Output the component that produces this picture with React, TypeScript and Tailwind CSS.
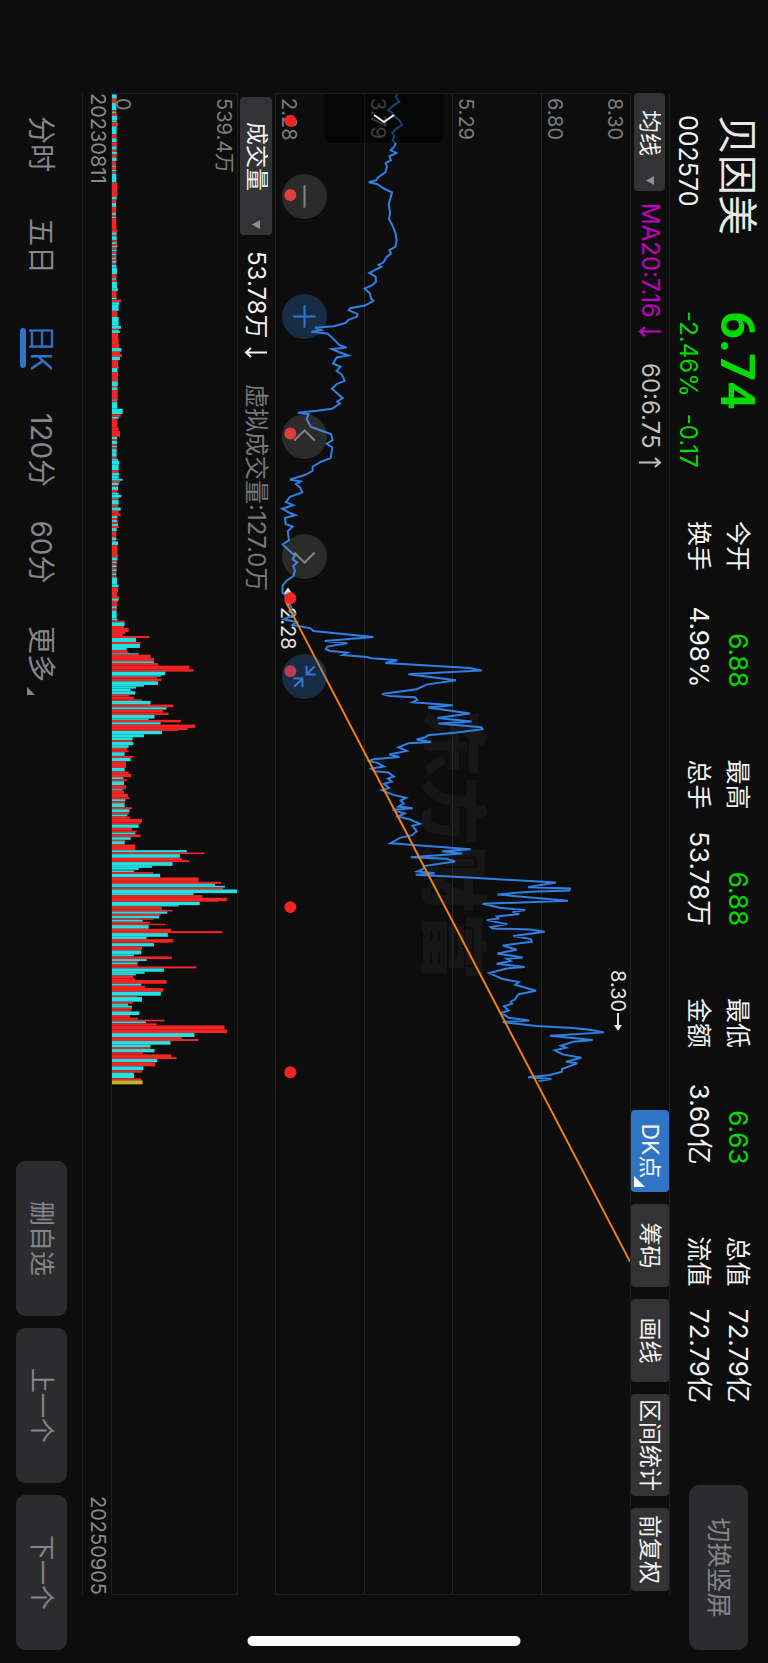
import React from "react";

const UP = "#f52424";
const DOWN = "#20e2e4";

// chart drawing units: 3 per pixel, x from the first day, y up from the bottom line
const CHART_W = 4503;
const CHART_H = 1062;
const VOLUME_H = 376;

const pricePoints =
  "1,364 9,359 23,370 35,352 49,336 55,347 67,355 79,370 93,378 104,362 116,349 127,355 139,350 149,359 159,354 169,344 177,361 187,340 199,345 207,329 219,333 235,328 249,308 259,300 265,278 271,305 283,322 295,348 311,344 331,338 356,342 376,339 396,350 416,358 439,362 459,358 469,340 479,345 489,332 506,322 513,308 519,316 537,280 549,299 563,300 573,290 584,266 599,282 613,285 621,292 635,267 643,222 649,218 661,245 669,242 679,216 687,210 697,172 702,117 709,135 714,106 719,154 731,168 753,190 761,211 766,168 776,192 785,217 791,182 809,171 819,194 831,182 843,198 861,206 871,182 885,168 913,200 923,184 929,192 945,168 951,122 957,66 961,98 976,92 999,104 1011,137 1021,165 1039,170 1050,152 1061,169 1093,164 1104,135 1119,110 1131,110 1144,87 1157,42 1163,74 1171,60 1181,72 1196,79 1209,42 1225,30 1234,52 1245,19 1257,40 1264,58 1273,27 1291,29 1299,50 1313,35 1339,39 1352,20 1371,40 1385,57 1397,50 1406,64 1417,52 1431,57 1447,52 1461,32 1476,20 1496,19 1511,34 1526,39 1544,47 1553,40 1561,57 1577,24 1585,62 1594,49 1604,104 1612,112 1630,292 1642,146 1649,214 1659,154 1667,150 1672,162 1677,214 1684,200 1690,272 1694,287 1700,364 1708,328 1723,582 1731,617 1742,397 1760,540 1773,452 1787,422 1801,318 1807,342 1811,417 1819,424 1826,410 1835,530 1842,456 1860,582 1873,484 1884,587 1890,487 1901,616 1907,620 1917,542 1925,456 1931,448 1938,422 1945,465 1949,397 1961,367 1972,392 1983,340 1990,370 1997,292 2002,280 2008,304 2019,324 2025,286 2033,297 2037,337 2049,353 2055,336 2064,347 2071,324 2083,339 2090,317 2104,352 2113,390 2121,374 2130,383 2139,367 2144,410 2149,350 2160,386 2169,366 2178,402 2191,432 2197,409 2213,422 2225,408 2233,372 2249,343 2267,584 2273,499 2280,558 2291,404 2296,512 2304,537 2317,447 2327,440 2334,424 2339,476 2344,419 2353,592 2367,840 2381,756 2385,882 2391,880 2395,762 2403,664 2422,876 2431,620 2443,672 2450,748 2456,710 2462,730 2469,662 2475,667 2480,632 2492,694 2501,644 2505,650 2508,762 2515,806 2528,712 2537,764 2545,768 2556,680 2569,722 2580,664 2592,740 2596,692 2603,704 2611,662 2621,746 2625,692 2639,640 2656,677 2666,728 2674,718 2692,780 2703,726 2717,718 2725,704 2731,708 2739,684 2751,698 2759,676 2773,698 2781,760 2786,680 2798,782 2804,892 2809,942 2817,984 2827,822 2840,950 2845,892 2857,855 2863,870 2871,836 2883,860 2893,916 2905,870 2910,904 2927,858 2935,858 2945,822 2952,756 2957,826 2963,787";

const signalDays = [80, 303, 1019, 1514, 1733, 2441, 2937];

// each bar: start, u (up) / d (down) / n (today), height; it runs to the next start
const volumeBlocks = [
  {
    offset: -39,
    bars: "40d14 53u14 65d13 88u13 92d13 97u15 105d15 118d14 124u18 136d14 160u14 172d14 184u15 196d14 206u14 212d15 220u14 230d14 240u12 254d12 258u12 267d13 272u12 278d13 305u16 348d14 356u13 366d12 378u12 396d12 402u12 408d12 412u13 445u16 454d14 462u14 466d14 478u15 484d14 490u17 495d16 500u14 506d14 512u13 518d13 524u14 530d13 536u14 540d13 546u12 552d13 560d15 580u14 592d13 597u14 603d15 622d18 630u14 650d14 656u28 664d22 672d20 690u16 708d20 735d27 744u20 748d20 756u18 770u20 790u17 803d26 812u20 822u28 828d24 838u18 843d16 856u20 864d16 874u18 904d17 916u16 920d16 928u18",
  },
  {
    offset: 711,
    bars: "0d24 6u18 15u18 40u22 52d28 62u24 70u30 78d22 88u18 108u20 112d16 124u18 152d17 166u16 170d16 178u17 206d16 210u16 214d16 234d32 250u26 258d20 264u16 290u20 300u24 318d15 325u15 330d15 340u14 345d15 350u14 355d14 366d14 378u14 384d18 390d22 402d20 418u20 426d22 434d20 444d32 450u24 456d20 464u18 468d18 478u16 486d20 492d28 500d20 504u18 508d20 522u18 530d26 540u20 548u26 556d16 562u16 568d16 574u18 580d18 586u20 592d14 602u13 620d13 628u12 632d18 644u16 670u18 680d16 690u14 694d15 698u14 704d14 710u14 716d14 722u13 728d13 734u13 740d15 762d20 770u18 785d14 790u16 798u22 804d18 812u14 826d14 830u14",
  },
  {
    offset: 1491,
    bars: "0u14 6u14 18u22 24d20 30u16 48d14 54u15 60d14 84d16 90u38 95d38 106u36 112u50 124u40 130u32 136u112 142d72 154u86 160d84 172d44 178u46 184u50 188d80 192u116 202u126 212d126 217u138 225u232 236u245 243d160 254d148 258u136 264u148 272d138 283d96 288d72 294d56 302d70 312u52 318u66 326u90 331d116 342u185 350d164 357u154 366u170 373d128 384d110 388u208 395d146 402u250 412u228 418u200 421d150 431d96 440d62 449u60 454d64 464d50 472u46 480u50 485d38 496u64 502d56 512u42 532d38 543u50 550u58 560d34 566u44 572d36 584u42 596d32 600u36 610u48 620u52 626d40 632u40 638d38 650u60 656d52 666u50 672d46 678u54 685u90 696u86 702d80 712u60 720u74 726d70 732u86 740d56 748u40 752d38 762u70",
  },
  {
    offset: 2241,
    bars: "29d225 36u278 41d204 52u210 59u232 65d182 76d120 82d80 88u70 90d66 95u124 100d145 111u260 124u328 130d310 136d340 141u335 147d376 158d245 164u272 172u346 182u322 184d264 194d200 198u150 208u182 213d166 220u146 226d142 234u125 238d92 244u114 250u160 254d110 265u178 272u332 278d168 289d104 296u184 306u168 308d126 318u90 330d88 342d66 348u180 356d104 362u80 366d76 372u78 378u254 384d156 394d98 400d72 405u64 414u70 419u164 430d88 436u100 443u154 454d147 466u76 470d90 484u62 490d48 496d60 502u60 508u58 513d82 524u54 532u78 538u158 543d102 549u134 555u338 567u346 578d248 590u210 596u260 602d176 613d116 620u116 626d128 636u94 642u178 650u194 656d136 666u130 678d94 690u90 697d66 714u88 720n92",
  },
];

const VOLUME_END = 2973;

const volumeBars = volumeBlocks
  .flatMap(({ offset, bars }) =>
    bars.split(" ").map((bar) => {
      const [, start, kind, height] = bar.match(/(\d+)([udn])(\d+)/)!;
      return { x: Number(start) + offset, kind, height: Number(height) };
    })
  )
  .map((bar, i, all) => ({
    ...bar,
    width: (i + 1 < all.length ? all[i + 1].x : VOLUME_END) - bar.x,
  }));

const barColor: Record<string, string> = { u: UP, d: DOWN, n: "#c9b32a" };

const stats = [
  [
    { label: "今开", value: "6.88", green: true },
    { label: "换手", value: "4.98%" },
  ],
  [
    { label: "最高", value: "6.88", green: true },
    { label: "总手", value: "53.78万" },
  ],
  [
    { label: "最低", value: "6.63", green: true },
    { label: "金额", value: "3.60亿" },
  ],
  [
    { label: "总值", value: "72.79亿" },
    { label: "流值", value: "72.79亿" },
  ],
];

const tabs = ["分时", "五日", "日K", "120分", "60分", "更多"];

const Header = () => (
  <header className="flex h-[98px] shrink-0 items-start pr-[13px] pl-[115px]">
    <div className="w-[196px] shrink-0 pt-[10px]">
      <h1 className="text-[40px] leading-[42px] text-[#e8e8e8]">贝因美</h1>
      <p className="mt-[13px] text-[25px] leading-[30px]">002570</p>
    </div>
    <div className="w-[210px] shrink-0 pt-[9px] text-[#00dc00]">
      <p className="font-['Roboto'] text-[49px] leading-[44px] font-bold">6.74</p>
      <p className="mt-[12px] flex gap-[17px] text-[24px] leading-[30px]">
        <span>-2.46%</span>
        <span>-0.17</span>
      </p>
    </div>
    <div className="mr-[82px] grid flex-1 grid-cols-4 gap-x-[72px] pt-[15px]">
      {stats.map((column, i) => (
        <dl key={i} className="flex flex-col gap-[9px] text-[25px] leading-[30px]">
          {column.map((item) => (
            <div key={item.label} className="flex justify-between whitespace-nowrap">
              <dt>{item.label}</dt>
              <dd className={`text-[26px] ${item.green ? "text-[#00dc00]" : ""}`}>{item.value}</dd>
            </div>
          ))}
        </dl>
      ))}
    </div>
    <button className="mt-[20px] h-[59px] w-[165px] shrink-0 rounded-[10px] bg-[#2c2c2e] text-[25px] text-[#85858a]">
      切换竖屏
    </button>
  </header>
);

const Picker = ({ label, className }: { label: string; className: string }) => (
  <div className="relative shrink-0">
    <select aria-label={label} className={`block appearance-none rounded-[4px] bg-[#333335] text-[23px] ${className}`}>
      <option>{label}</option>
    </select>
    <svg className="pointer-events-none absolute top-1/2 right-[6px] h-[8px] w-[9px] -translate-y-1/2" viewBox="0 0 9 8">
      <path d="M0 0h9L4.5 8z" fill="#8e8e93" />
    </svg>
  </div>
);

const Trend = ({ up = false }: { up?: boolean }) => (
  <svg
    className="ml-[8px] h-[24px] w-[11px] shrink-0"
    viewBox="0 0 11 24"
    fill="none"
    stroke="currentColor"
    strokeWidth="2"
  >
    <path d={up ? "M5.500 23V2M1 7l4.500-5L10 7" : "M5.500 1V22M1 17l4.500 5L10 17"} />
  </svg>
);

const ToolButton = ({ children, className = "w-[83px] bg-[#333335]" }: { children: React.ReactNode; className?: string }) => (
  <button className={`relative h-[38px] rounded-[4px] text-[23px] whitespace-nowrap ${className}`}>{children}</button>
);

const Toolbar = () => (
  <div className="mr-[68px] ml-[93px] flex h-[39px] shrink-0 items-center border-t border-[#1f1f21]">
    <Picker label="均线" className="h-[31px] w-[98px] pl-[17px]" />
    <span className="ml-[12px] flex w-[160px] items-center text-[24px] text-[#c400c4]">
      MA20:7.16
      <Trend />
    </span>
    <span className="flex items-center text-[24px] text-[#c0c0c0]">
      60:6.75
      <Trend up />
    </span>
    <div className="mr-[4px] ml-auto flex gap-[12px]">
      <ToolButton className="w-[82px] bg-[#2f74c5]">
        DK点
        <svg className="absolute right-[5px] bottom-[3px] size-[11px]" viewBox="0 0 11 11">
          <path d="M11 0v11H0z" fill="#fff" />
        </svg>
      </ToolButton>
      <ToolButton>筹码</ToolButton>
      <ToolButton>画线</ToolButton>
      <ToolButton className="w-[102px] bg-[#333335]">区间统计</ToolButton>
      <ToolButton>前复权</ToolButton>
    </div>
  </div>
);

const RoundButton = ({ label, path, blue = false }: { label: string; path: string; blue?: boolean }) => (
  <button
    aria-label={label}
    className={`size-[45px] rounded-full ${blue ? "bg-[#3074c8]/30" : "bg-[#96969b]/22"}`}
  >
    <svg viewBox="-22 -22 44 44" fill="none" stroke={blue ? "#2f78cc" : "#848488"} strokeWidth="2">
      <path d={path} />
    </svg>
  </button>
);

const PriceChart = () => {
  const line = pricePoints
    .split(" ")
    .map((p) => p.split(",").map(Number))
    .map(([x, h]) => `${x},${CHART_H - h}`)
    .join(" ");

  return (
    <section className="relative mr-[68px] ml-[93px] flex-1 border border-[#1f1f21]">
      <span className="absolute top-[133px] left-[41%] font-['Noto_Sans_CJK_SC'] text-[68px] leading-[80px] font-black text-[#161616]">
        东方财富
      </span>
      <div className="relative flex h-full flex-col text-[20px] leading-[20px] text-[#7c7c80]">
        <span className="absolute top-[5px] left-[4px]">8.30</span>
        {["6.80", "5.29", "3.79", "2.28"].map((price) => (
          <div key={price} className="flex flex-1 items-end border-b border-[#262628] pb-[3px] pl-[4px] last:border-0">
            {price}
          </div>
        ))}
      </div>
      <span className="absolute bottom-[2px] left-[513px] text-[20px] leading-[20px] text-[#e4e4e4]">2.28</span>
      <svg
        className="absolute inset-0 h-full w-full"
        viewBox={`0 0 ${CHART_W} ${CHART_H}`}
        preserveAspectRatio="none"
        fill="none"
      >
        <path d="M1488 1026h48M1500 1016l-14 10 14 10z" stroke="#e4e4e4" strokeWidth="5" />
        <polyline points={line} stroke="#2f80e4" strokeWidth="6" strokeLinejoin="miter" />
        <path d="M1521 1034L3505 0" stroke="#f08010" strokeWidth="6" />
        {signalDays.map((x) => (
          <circle key={x} cx={x} cy="1019" r="18" fill={UP} />
        ))}
      </svg>
      <span className="absolute top-[2px] left-[876px] flex items-center text-[20px] leading-[20px] text-[#e4e4e4]">
        8.30
        <svg className="h-[10px] w-[19px]" viewBox="0 0 19 10">
          <path d="M1 5h13" stroke="#e4e4e4" strokeWidth="2" />
          <path d="M13 1l6 4-6 4z" fill="#e4e4e4" />
        </svg>
      </span>
      <button
        aria-label="展开"
        className="absolute bottom-[49px] left-0 flex h-[118px] w-[49px] items-center justify-center rounded-r-[3px] bg-black/50"
      >
        <svg className="h-[22px] w-[9px]" viewBox="0 0 9 22" fill="none" stroke="#e8e8e8" strokeWidth="2">
          <path d="M1 1l7 10-7 10" />
        </svg>
      </button>
      <div className="absolute bottom-[6px] left-[80px] flex gap-[75px]">
        <RoundButton label="缩小" path="M-11 0H11" />
        <RoundButton label="放大" path="M-11 0H11M0-11V11" blue />
        <RoundButton label="左移" path="M4-10L-6 0 4 10" />
        <RoundButton label="右移" path="M-4-10L6 0-4 10" />
        <RoundButton label="还原" path="M-10-10L-2-2M-10.500-2H-2V-11M10 10L2 2M10.500 2H2V11" blue />
      </div>
    </section>
  );
};

const VolumeChart = () => (
  <>
    <div className="mr-[68px] ml-[97px] flex h-[37px] shrink-0 items-center text-[24px] whitespace-nowrap">
      <Picker label="成交量" className="h-[32px] w-[138px] pl-[25px]" />
      <span className="ml-[16px] flex w-[133px] items-center">
        53.78万
        <Trend />
      </span>
      <span className="text-[#77777b]">虚拟成交量:127.0万</span>
    </div>
    <section className="relative mr-[68px] ml-[93px] h-[127px] shrink-0 border border-[#1f1f21] text-[20px] leading-[20px] text-[#7c7c80]">
      <svg
        className="absolute inset-0 h-full w-full"
        viewBox={`0 0 ${CHART_W} ${VOLUME_H}`}
        preserveAspectRatio="none"
      >
        {volumeBars.map((bar) => (
          <rect
            key={bar.x}
            x={bar.x}
            y={VOLUME_H - bar.height}
            width={bar.width}
            height={bar.height}
            fill={barColor[bar.kind]}
          />
        ))}
      </svg>
      <div className="relative flex h-full flex-col justify-between pt-[3px] pb-[1px] pl-[4px]">
        <span>539.4万</span>
        <span>0</span>
      </div>
    </section>
    <div className="mr-[68px] ml-[93px] flex h-[29px] shrink-0 items-center justify-between border-b border-[#1f1f21] pb-[2px] text-[20px] leading-[20px] text-[#8a8a8e]">
      <span>20230811</span>
      <span>20250905</span>
    </div>
  </>
);

const Footer = () => (
  <footer className="flex h-[82px] shrink-0 pr-[13px] pl-[93px]">
    <nav className="flex flex-1">
      {tabs.map((tab) => (
        <button
          key={tab}
          className={`relative w-[102px] text-[28px] whitespace-nowrap ${tab === "日K" ? "text-[#2f74c5]" : "text-[#85858a]"}`}
        >
          {tab}
          {tab === "日K" && (
            <span className="absolute bottom-[20px] left-1/2 h-[6px] w-[40px] -translate-x-1/2 rounded-full bg-[#2f74c5]" />
          )}
          {tab === "更多" && (
            <svg className="absolute right-[10px] bottom-[27px] size-[8px]" viewBox="0 0 8 8">
              <path d="M8 0v8H0z" fill="#85858a" />
            </svg>
          )}
        </button>
      ))}
    </nav>
    <div className="flex gap-[12px] pt-[15px] text-[25px] text-[#85858a]">
      {["删自选", "上一个", "下一个"].map((label) => (
        <button key={label} className="h-[51px] w-[155px] rounded-[9px] bg-[#2c2c2e]">
          {label}
        </button>
      ))}
    </div>
  </footer>
);

export default function App() {
  return (
    <div className="h-screen w-full overflow-hidden bg-[#0d0d0d]">
      {/* landscape screen, turned a quarter clockwise */}
      <main className="relative flex h-[100vw] w-[100vh] origin-top-left translate-x-[100vw] rotate-90 flex-col font-['Inter','Noto_Sans_CJK_SC',sans-serif] leading-none text-[#f2f2f2]">
        <Header />
        <Toolbar />
        <PriceChart />
        <VolumeChart />
        <Footer />
        <div className="absolute top-1/2 right-[17px] h-[273px] w-[10px] -translate-y-1/2 rounded-full bg-white" />
      </main>
    </div>
  );
}
